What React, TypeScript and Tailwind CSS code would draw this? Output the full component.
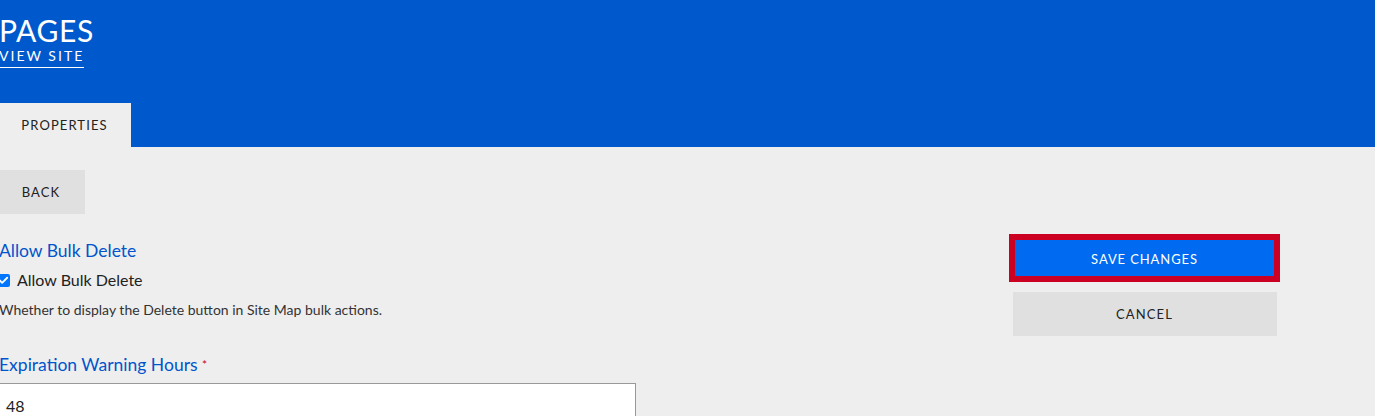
import { Check } from "lucide-react"

export default function App() {
  return (
    <div className="min-h-screen bg-[#eeeeee] font-['Lato','Liberation_Sans',sans-serif] text-[#333333] overflow-hidden">
      {/* Header */}
      <div className="bg-[#0059cc] h-[147px] flex flex-col justify-between">
        <div className="pt-[12px]">
          <h1 className="text-[30px] leading-[36px] tracking-[0.6px] text-white ml-[-1px]">PAGES</h1>
          <a className="block w-fit text-[14px] leading-[16px] tracking-[2px] text-white border-b border-white pb-[3px] ml-[-1px]">
            VIEW SITE
          </a>
        </div>
        <div className="flex">
          <div className="w-[131px] h-[44px] bg-[#eeeeee] flex items-center justify-center text-[13px] tracking-[1.1px] text-[#222] pr-[2px] pt-[1px]">
            PROPERTIES
          </div>
        </div>
      </div>

      {/* Body */}
      <div className="pt-[23px] flex">
        <div className="w-[636px]">
          <button className="w-[85px] h-[44px] bg-[#e0e0e0] text-[13px] tracking-[1.1px] text-[#222] pr-[3px] pt-[1px]">BACK</button>

          <div className="mt-[24px]">
            <h2 className="text-[17.5px] leading-[26px] text-[#0055cc] ml-[-1px]">Allow Bulk Delete</h2>
            <label className="flex items-center gap-[7px] mt-[5px] ml-[-3px]">
              <span className="w-[13px] h-[13px] rounded-[2px] bg-[#0075ff] flex items-center justify-center">
                <Check className="w-[11px] h-[11px] text-white" strokeWidth={4} />
              </span>
              <span className="text-[16px] leading-[22px] text-[#222]">Allow Bulk Delete</span>
            </label>
            <p className="text-[14px] leading-[20px] mt-[9px] ml-[-1px] text-[#333]">
              Whether to display the Delete button in Site Map bulk actions.
            </p>
          </div>

          <div className="mt-[32px]">
            <h2 className="text-[17.5px] leading-[26px] text-[#0055cc] ml-[-1px]">
              Expiration Warning Hours <span className="text-[#cc0022] text-[12px] align-top">*</span>
            </h2>
            <div className="mt-[5px] ml-[-2px] w-[638px] h-[46px] bg-white border border-[#999999] flex items-center px-[7px] text-[16px] text-[#222]">
              48
            </div>
          </div>
        </div>

        <div className="ml-auto mr-[95px] mt-[64px] flex flex-col items-center">
          <div className="w-[271px] h-[48px] border-[6px] border-[#cc0022] bg-[#006af0] flex items-center justify-center text-[13px] tracking-[0.9px] text-white pt-[3px]">
            SAVE CHANGES
          </div>
          <button className="mt-[10px] w-[264px] h-[44px] bg-[#e0e0e0] text-[13px] tracking-[1.1px] text-[#222] pt-[1px]">CANCEL</button>
        </div>
      </div>
    </div>
  )
}
